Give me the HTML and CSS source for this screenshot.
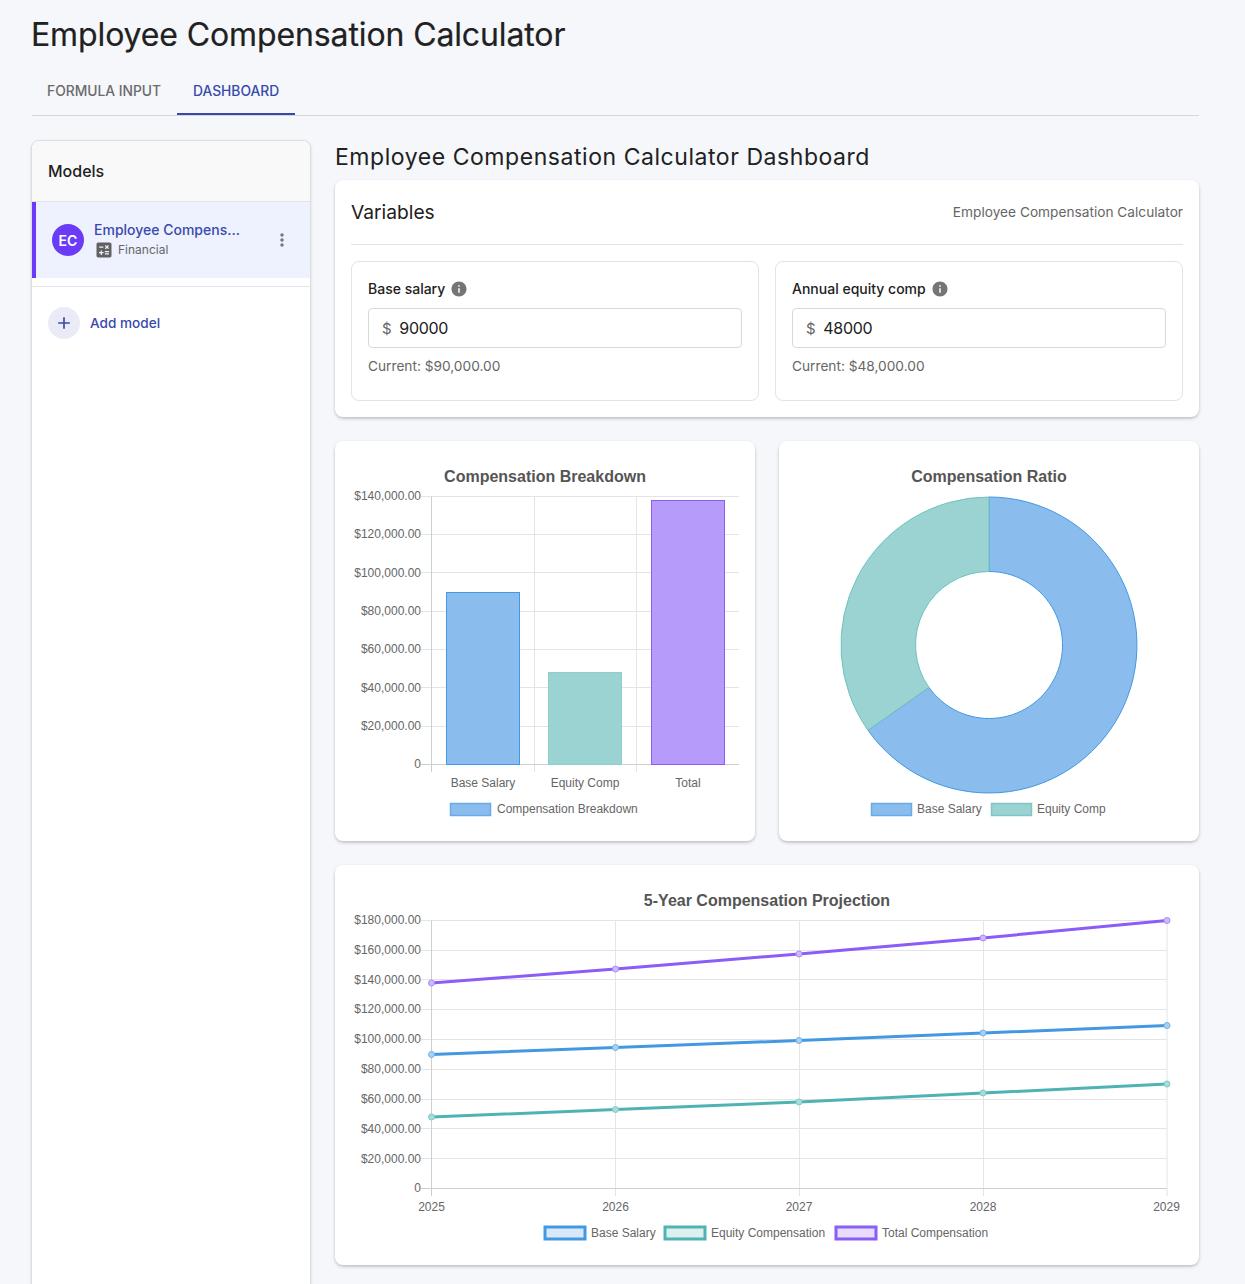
FILE: index.html
```html
<!DOCTYPE html>
<html lang="en">
<head>
  <meta charset="UTF-8">
  <title>Employee Compensation Calculator</title>
  <link rel="stylesheet" href="styles.css">
</head>
<body>
  <div class="page">
    <h1 class="page-title">Employee Compensation Calculator</h1>
    <div class="tabs">
      <div class="tab">Formula Input</div>
      <div class="tab tab-active">Dashboard</div>
    </div>

    <div class="layout">
      <aside class="sidebar">
        <div class="sidebar-head">Models</div>
        <div class="model-row">
          <div class="avatar">EC</div>
          <div class="model-text">
            <div class="model-name">Employee Compens...</div>
            <div class="model-type">
              <svg class="calc-icon" viewBox="0 0 24 24"><path fill="#616161" d="M19 3H5c-1.100 0-2 .9-2 2v14c0 1.100.9 2 2 2h14c1.100 0 2-.9 2-2V5c0-1.100-.9-2-2-2zm-5.970 4.060L14.090 6l1.410 1.410L16.910 6l1.060 1.060-1.410 1.410 1.410 1.410-1.060 1.060-1.410-1.400-1.410 1.410-1.060-1.060 1.410-1.410-1.410-1.420zm-6.780.66h5v1.500h-5v-1.500zM11.500 16h-2v2H8v-2H6v-1.500h2v-2h1.500v2h2V16zm6.500 1.250h-5v-1.500h5v1.500zm0-2.500h-5v-1.500h5v1.500z"/></svg>
              <span>Financial</span>
            </div>
          </div>
          <svg class="more-icon" viewBox="0 0 24 24"><path fill="#757575" d="M12 8c1.100 0 2-.9 2-2s-.9-2-2-2-2 .9-2 2 .9 2 2 2zm0 2c-1.100 0-2 .9-2 2s.9 2 2 2 2-.9 2-2-.9-2-2-2zm0 6c-1.100 0-2 .9-2 2s.9 2 2 2 2-.9 2-2-.9-2-2-2z"/></svg>
        </div>
        <div class="add-row">
          <div class="add-circle">
            <svg viewBox="0 0 24 24"><path fill="#3949ab" d="M19 13h-6v6h-2v-6H5v-2h6V5h2v6h6v2z"/></svg>
          </div>
          <span class="add-label">Add model</span>
        </div>
      </aside>

      <main class="content">
        <h2 class="dash-title">Employee Compensation Calculator Dashboard</h2>

        <section class="card vars-card">
          <div class="vars-head">
            <span class="vars-title">Variables</span>
            <span class="vars-sub">Employee Compensation Calculator</span>
          </div>
          <div class="vars-grid">
            <div class="var-box">
              <div class="var-label">Base salary
                <svg class="info-icon" viewBox="0 0 24 24"><path fill="#757575" d="M12 2C6.480 2 2 6.480 2 12s4.480 10 10 10 10-4.480 10-10S17.520 2 12 2zm1 15h-2v-6h2v6zm0-8h-2V7h2v2z"/></svg>
              </div>
              <div class="var-input"><span class="dollar">$</span><span>90000</span></div>
              <div class="var-current">Current: $90,000.00</div>
            </div>
            <div class="var-box">
              <div class="var-label">Annual equity comp
                <svg class="info-icon" viewBox="0 0 24 24"><path fill="#757575" d="M12 2C6.480 2 2 6.480 2 12s4.480 10 10 10 10-4.480 10-10S17.520 2 12 2zm1 15h-2v-6h2v6zm0-8h-2V7h2v2z"/></svg>
              </div>
              <div class="var-input"><span class="dollar">$</span><span>48000</span></div>
              <div class="var-current">Current: $48,000.00</div>
            </div>
          </div>
        </section>

        <div class="chart-row">
          <section class="card chart-card">
            <svg class="chart" viewBox="335 441 420 400">
              <text class="chart-title" x="545" y="482">Compensation Breakdown</text>
              <g class="grid">
                <path d="M421 496.500H739M421 534.500H739M421 572.500H739M421 611.500H739M421 649.500H739M421 687.500H739M421 726.500H739"/>
                <path d="M534.500 496.500V772M636.500 496.500V772"/>
              </g>
              <path class="axis" d="M431.500 496.500V772M421 764.500H739"/>
              <rect x="446.500" y="592.500" width="73" height="172" fill="#8bbcee" stroke="#4299e1"/>
              <rect x="548.500" y="672.500" width="73" height="92" fill="#9bd2d2" stroke="#8dcfca"/>
              <rect x="651.500" y="500.500" width="73" height="264" fill="#b79bfb" stroke="#8b5cf6"/>
              <g class="tick-y">
                <text x="421" y="500">$140,000.00</text>
                <text x="421" y="538">$120,000.00</text>
                <text x="421" y="577">$100,000.00</text>
                <text x="421" y="615">$80,000.00</text>
                <text x="421" y="653">$60,000.00</text>
                <text x="421" y="692">$40,000.00</text>
                <text x="421" y="730">$20,000.00</text>
                <text x="421" y="768">0</text>
              </g>
              <g class="tick-x">
                <text x="483" y="787">Base Salary</text>
                <text x="585" y="787">Equity Comp</text>
                <text x="688" y="787">Total</text>
              </g>
              <rect class="legend-box" x="450.500" y="803.500" width="40" height="12" fill="#8bbcee" stroke="#6aaae8"/>
              <text class="legend" x="497" y="813">Compensation Breakdown</text>
            </svg>
          </section>

          <section class="card chart-card">
            <svg class="chart" viewBox="779 441 420 400">
              <text class="chart-title" x="989" y="482">Compensation Ratio</text>
              <path d="M989 497A148 148 0 1 1 868 730.300L929 687.400A73.500 73.500 0 1 0 989 571.500Z" fill="#8bbcee" stroke="#4299e1"/>
              <path d="M868 730.300A148 148 0 0 1 989 497V571.500A73.500 73.500 0 0 0 929 687.400Z" fill="#9bd2d2" stroke="#6fc2bd"/>
              <rect class="legend-box" x="871.500" y="803.500" width="40" height="12" fill="#8bbcee" stroke="#6aaae8"/>
              <text class="legend" x="917" y="813">Base Salary</text>
              <rect class="legend-box" x="991.500" y="803.500" width="40" height="12" fill="#9bd2d2" stroke="#7fc6c6"/>
              <text class="legend" x="1037" y="813">Equity Comp</text>
            </svg>
          </section>
        </div>

        <section class="card chart-card line-card">
          <svg class="chart" viewBox="335 865 864 400">
            <text class="chart-title" x="767" y="906">5-Year Compensation Projection</text>
            <g class="grid">
              <path d="M421 920.500H1167M421 950.500H1167M421 979.500H1167M421 1009.500H1167M421 1039.500H1167M421 1069.500H1167M421 1099.500H1167M421 1128.500H1167M421 1158.500H1167"/>
              <path d="M615.500 920.500V1196M799.500 920.500V1196M983.500 920.500V1196M1167 920.500V1196"/>
            </g>
            <path class="axis" d="M431.500 920.500V1196M421 1188.500H1167"/>
            <g class="tick-y">
              <text x="421" y="924">$180,000.00</text>
              <text x="421" y="954">$160,000.00</text>
              <text x="421" y="984">$140,000.00</text>
              <text x="421" y="1013">$120,000.00</text>
              <text x="421" y="1043">$100,000.00</text>
              <text x="421" y="1073">$80,000.00</text>
              <text x="421" y="1103">$60,000.00</text>
              <text x="421" y="1133">$40,000.00</text>
              <text x="421" y="1163">$20,000.00</text>
              <text x="421" y="1192">0</text>
            </g>
            <g class="tick-x">
              <text x="431.500" y="1211">2025</text>
              <text x="615.500" y="1211">2026</text>
              <text x="799" y="1211">2027</text>
              <text x="983" y="1211">2028</text>
              <text x="1166.500" y="1211">2029</text>
            </g>
            <polyline class="series" stroke="#8b5cf6" points="431.500,983 615.500,969 799,954 983,938 1167,920.500"/>
            <polyline class="series" stroke="#4299e1" points="431.500,1054.500 615.500,1047.500 799,1040.500 983,1033 1167,1025.500"/>
            <polyline class="series" stroke="#4fb3b3" points="431.500,1117 615.500,1109.500 799,1102 983,1093 1167,1084"/>
            <g class="dots dots-purple">
              <circle cx="431.500" cy="983" r="3"/><circle cx="615.500" cy="969" r="3"/><circle cx="799" cy="954" r="3"/><circle cx="983" cy="938" r="3"/><circle cx="1167" cy="920.500" r="3"/>
            </g>
            <g class="dots dots-blue">
              <circle cx="431.500" cy="1054.500" r="3"/><circle cx="615.500" cy="1047.500" r="3"/><circle cx="799" cy="1040.500" r="3"/><circle cx="983" cy="1033" r="3"/><circle cx="1167" cy="1025.500" r="3"/>
            </g>
            <g class="dots dots-teal">
              <circle cx="431.500" cy="1117" r="3"/><circle cx="615.500" cy="1109.500" r="3"/><circle cx="799" cy="1102" r="3"/><circle cx="983" cy="1093" r="3"/><circle cx="1167" cy="1084" r="3"/>
            </g>
            <rect class="legend-line" x="545" y="1227" width="40" height="12" fill="#d9e8f8" stroke="#4299e1"/>
            <text class="legend" x="591" y="1237">Base Salary</text>
            <rect class="legend-line" x="665" y="1227" width="40" height="12" fill="#dcf0ee" stroke="#4fb3b3"/>
            <text class="legend" x="711" y="1237">Equity Compensation</text>
            <rect class="legend-line" x="836" y="1227" width="40" height="12" fill="#e7dcfc" stroke="#8b5cf6"/>
            <text class="legend" x="882" y="1237">Total Compensation</text>
          </svg>
        </section>
      </main>
    </div>
  </div>
</body>
</html>
```

FILE: styles.css
```css
html, body { margin: 0; height: 100%; overflow: hidden; }
body { background: #f5f7fb; color: #212121; font-family: Inter, "Liberation Sans", sans-serif; }
.page { padding: 0 46px 0 32px; }

.page-title { margin: 0 0 0 -1px; padding-top: 14px; height: 53px; font-size: 32px; line-height: 41px; font-weight: 400; letter-spacing: -0.12px; -webkit-text-stroke: 0.2px #212121; }
.tabs { display: flex; height: 48px; border-bottom: 1px solid #d5d7dc; }
.tab { box-sizing: border-box; display: flex; align-items: center; justify-content: center; padding: 0 16px; font-size: 13.8px; font-weight: 500; text-transform: uppercase; color: #6b6b6b; }
.tab:first-child { margin-left: -1px; }
.tab-active { color: #3949ab; border-bottom: 2px solid #3949ab; padding-top: 2px; }

.layout { display: flex; gap: 24px; margin: 24px 0 0 -1px; align-items: flex-start; }

.sidebar { width: 278px; height: 1200px; flex: none; background: #fff; border: 1px solid #dcdde0; border-radius: 8px; box-shadow: 0 1px 3px rgba(0,0,0,0.12); overflow: hidden; }
.sidebar-head { height: 60px; padding-left: 16px; display: flex; align-items: center; background: #f9f9f9; border-bottom: 1px solid #e2e3e8; font-size: 16px; font-weight: 500; }
.model-row { height: 76px; display: flex; align-items: center; padding: 0 16px; background: #eef2fe; border-left: 4px solid #6a3cf7; }
.avatar { width: 32px; height: 32px; border-radius: 50%; background: #6a3cf7; color: #fff; font-size: 14px; font-weight: 600; display: flex; align-items: center; justify-content: center; flex: none; }
.model-text { margin-left: 10px; flex: 1; }
.model-name { font-size: 14px; font-weight: 500; line-height: 20px; color: #3949ab; }
.model-type { display: flex; align-items: center; font-size: 12px; line-height: 18px; color: #666; }
.calc-icon { width: 20px; height: 20px; margin-right: 4px; flex: none; }
.more-icon { width: 20px; height: 20px; margin-right: 2px; flex: none; }
.add-row { display: flex; align-items: center; gap: 10px; margin-top: 8px; padding: 20px 16px; border-top: 1px solid #e2e3e8; }
.add-circle { width: 32px; height: 32px; border-radius: 50%; background: #eaebf6; display: flex; align-items: center; justify-content: center; }
.add-circle svg { width: 20px; height: 20px; }
.add-label { font-size: 13.6px; font-weight: 500; color: #3949ab; }

.content { flex: 1; min-width: 0; }
.dash-title { margin: 0; height: 40px; font-size: 23px; line-height: 34px; font-weight: 400; letter-spacing: 0.55px; }
.card { background: #fff; border-radius: 8px; box-shadow: 0 2px 4px -1px rgba(0,0,0,0.2), 0 1px 3px rgba(0,0,0,0.12); }

.vars-card { padding: 16px; height: 237px; box-sizing: border-box; }
.vars-head { display: flex; justify-content: space-between; align-items: center; height: 32px; padding-bottom: 16px; border-bottom: 1px solid #e2e3e8; }
.vars-title { font-size: 19.2px; font-weight: 400; }
.vars-sub { font-size: 13.7px; color: #666; }
.vars-grid { display: grid; grid-template-columns: 1fr 1fr; gap: 16px; margin-top: 16px; }
.var-box { box-sizing: border-box; height: 140px; padding: 16px; border: 1px solid #e2e3e8; border-radius: 8px; }
.var-label { display: flex; align-items: center; gap: 5px; height: 20px; font-size: 14px; font-weight: 500; }
.info-icon { width: 18px; height: 18px; flex: none; margin-top: 1px; }
.var-input { display: flex; align-items: center; gap: 8px; height: 38px; margin-top: 10px; padding: 0 13px; border: 1px solid #d8d9dd; border-radius: 4px; font-size: 16px; letter-spacing: -0.3px; }
.dollar { color: #666; font-size: 15px; }
.var-current { margin-top: 8px; font-size: 13.7px; line-height: 20px; color: #666; }

.chart-row { display: grid; grid-template-columns: 1fr 1fr; gap: 24px; margin-top: 24px; }
.chart-card { height: 400px; }
.line-card { margin-top: 24px; }
.chart { display: block; width: 100%; height: 100%; font-family: "Liberation Sans", Arial, sans-serif; }
.chart-title { font-size: 16px; font-weight: 700; fill: #555; text-anchor: middle; }
.grid path { fill: none; stroke: #e4e4e4; stroke-width: 1; }
.axis { fill: none; stroke: #cfcfcf; stroke-width: 1; }
.tick-y text { font-size: 12px; fill: #666; text-anchor: end; }
.tick-x text { font-size: 12px; fill: #666; text-anchor: middle; }
.legend { font-size: 12px; fill: #666; }
.legend-box { stroke-width: 1.5; }
.legend-line { stroke-width: 3; }
.series { fill: none; stroke-width: 3; }
.dots circle { stroke-width: 1; }
.dots-purple circle { fill: #cdb9fb; stroke: #a98bf9; }
.dots-blue circle { fill: #a9d0f2; stroke: #6fb2ec; }
.dots-teal circle { fill: #a9dcd9; stroke: #7fc9c6; }
```
